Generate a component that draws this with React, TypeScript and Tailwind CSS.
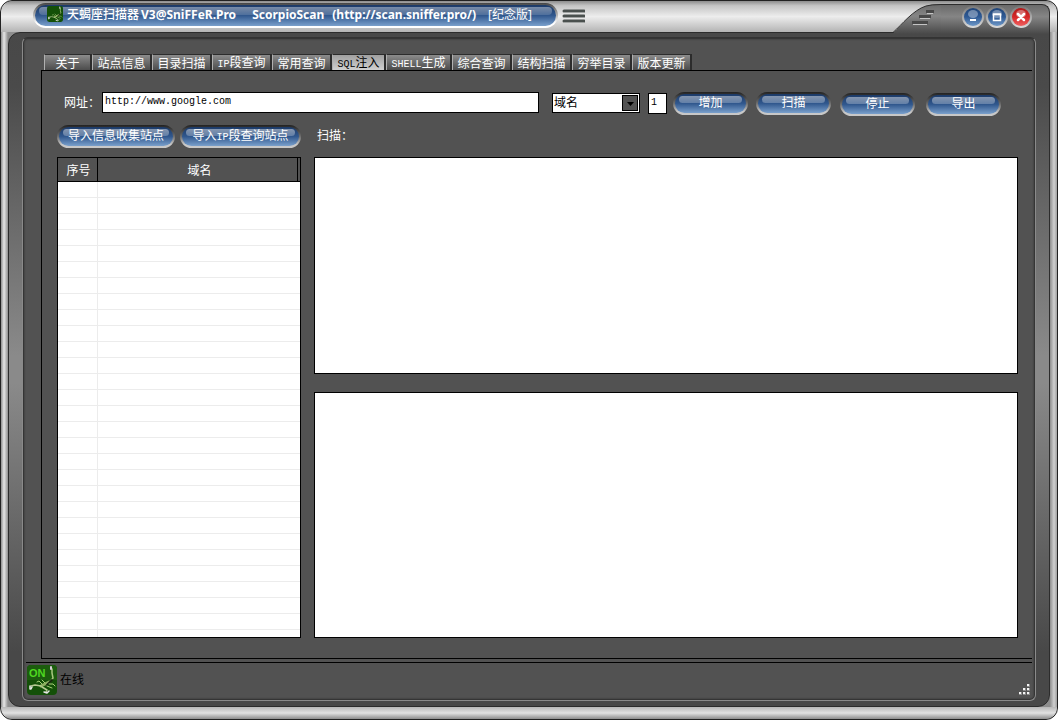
import { useState } from "react";
import type { ReactNode } from "react";
import clsx from "clsx";

const TABS = [
  { label: "关于", width: "w-12" },
  { label: "站点信息", width: "w-[60px]" },
  { label: "目录扫描", width: "w-[60px]" },
  { latin: "IP", label: "段查询", width: "w-[60px]" },
  { label: "常用查询", width: "w-[60px]" },
  { latin: "SQL", label: "注入", width: "w-[54px]" },
  { latin: "SHELL", label: "生成", width: "w-[66px]" },
  { label: "综合查询", width: "w-[60px]" },
  { label: "结构扫描", width: "w-[60px]" },
  { label: "穷举目录", width: "w-[60px]" },
  { label: "版本更新", width: "w-[60px]" },
];

const EMPTY_ROWS = 28;

/** Half-width latin letters, 6px each, next to 12px Chinese glyphs. */
function Latin({ children }: { children: ReactNode }) {
  return <span className="font-['Liberation_Mono',monospace] text-[10px] leading-none">{children}</span>;
}

function GlossButton({ children, className }: { children: ReactNode; className?: string }) {
  return (
    <button
      type="button"
      className={clsx(
        "relative h-[23px] shrink-0 rounded-full border-2 border-transparent [background:linear-gradient(#1c3a68,#31588e_50%,#7aa0cc)_padding-box,linear-gradient(#222,#707070_50%,#c8c8c8_85%)_border-box] text-xs leading-4 whitespace-nowrap text-white",
        className,
      )}
    >
      <span className="absolute inset-x-1 top-0.5 h-[7px] rounded-full bg-linear-to-b from-white/45 to-white/25" />
      <span className="relative -top-0.5">{children}</span>
    </button>
  );
}

function WindowButton({ label, danger, children }: { label: string; danger?: boolean; children: ReactNode }) {
  return (
    <button
      type="button"
      aria-label={label}
      className={clsx(
        "flex size-[22px] items-center justify-center rounded-full border-2 border-transparent",
        danger
          ? "[background:linear-gradient(#b01c1c,#d42828_50%,#f06060)_padding-box,linear-gradient(#777,#ddd)_border-box]"
          : "[background:linear-gradient(#1f4478,#2f5a94_50%,#6e98c8)_padding-box,linear-gradient(#777,#ddd)_border-box]",
      )}
    >
      <svg width="18" height="18" viewBox="0 0 18 18" className="shrink-0">
        <ellipse cx="9" cy="6" rx="5" ry="4" fill="#fff" opacity="0.35" />
        {children}
      </svg>
    </button>
  );
}

function Scorpion() {
  return (
    <g fill="none" strokeLinecap="round" strokeLinejoin="round">
      <path d="M25 4 L25 8 L26 13 L23 17 L19 19" stroke="#a8c880" strokeWidth="1.5" />
      <path d="M24 2 L24 4" stroke="#d8d0d8" strokeWidth="2" />
      <path d="M22 17 L14 21" stroke="#8dad60" strokeWidth="3" />
      <path d="M25 15 L20 20" stroke="#15280c" strokeWidth="2" />
      <path d="M14 21 L8 20 L4 21 M15 22 L20 25 L19 27" stroke="#b4c890" strokeWidth="1.5" />
      <path d="M3 21 L3 24 M5 22 L4 24 M17 27 L20 28 L22 26" stroke="#e6e6e6" strokeWidth="1.5" />
      <path d="M15 19 L12 16 L10 17 M18 18 L15 15 M22 19 L26 19 L28 21 M20 21 L25 23" stroke="#a8cf78" />
    </g>
  );
}

function TitleBar() {
  return (
    <header className="flex h-[31px] items-start rounded-t-xl bg-[linear-gradient(#8d8d8d,#c4c4c4_15%,#ededed_50%,#b4b4b4)] pr-[7px] pl-8">
      <div className="relative mt-0.5 flex h-[25px] w-[525px] items-center rounded-full border-2 border-transparent [background:linear-gradient(#1c3a68,#31588e_50%,#7aa0cc)_padding-box,linear-gradient(#444,#aaa_45%,#fff_80%)_border-box] pl-3">
        <span className="absolute inset-x-1 top-0.5 h-2 rounded-full bg-linear-to-b from-white/40 to-white/15" />
        <svg width="16" height="16" viewBox="0 0 30 30" className="relative mr-1 -mt-1 shrink-0">
          <rect width="30" height="30" rx="4" fill="#145008" />
          <Scorpion />
        </svg>
        <h1 className="relative -mt-0.5 flex font-['Noto_Sans','Noto_Sans_CJK_SC',sans-serif] text-xs leading-4 whitespace-pre text-white">
          <span className="font-medium">天蝎座扫描器</span>
          <span className="ml-0.5 font-bold">V3@SniFFeR.Pro</span>
          <span className="ml-4 font-bold">ScorpioScan</span>
          <span className="ml-2 font-bold">(http://scan.sniffer.pro/)</span>
          <span className="ml-3">[纪念版]</span>
        </h1>
      </div>
      <button type="button" aria-label="菜单" className="mt-[7px] ml-1">
        <svg width="23" height="16" viewBox="0 0 23 16">
          <path d="M2 4H22M2 9H22M2 14H22" stroke="#f5f5f5" strokeWidth="2" />
          <path d="M2 3H22M2 8H22M2 13H22" stroke="#4a504e" strokeWidth="3" strokeLinecap="round" />
        </svg>
      </button>
      <div className="relative z-10 mt-[3px] ml-auto flex h-[30px]">
        <svg width="48" height="30" viewBox="0 0 48 30" className="shrink-0">
          <defs>
            <linearGradient id="shoulder" x1="0" y1="0" x2="0" y2="1">
              <stop offset="0" stopColor="#6a6a6a" />
              <stop offset="0.4" stopColor="#858585" />
              <stop offset="1" stopColor="#484848" />
            </linearGradient>
          </defs>
          <path d="M0 29 C9 21 20 6 33 2 Q38 0 48 0 V30 H0Z" fill="url(#shoulder)" />
          <path d="M0 28.5 C9 20.500 20 6 33 2 Q38 .5 48 .5" fill="none" stroke="#2c2c2c" />
          <path d="M34 9.500H40M27 14.500H37M20 20.500H34" stroke="#c4c4c4" />
          <path d="M33 7.500H41M26 12.500H38M19 18.500H35" stroke="#484848" strokeWidth="3" />
        </svg>
        <div className="flex items-start gap-0.5 rounded-tr-lg border-t border-r border-[#2c2c2c] bg-[linear-gradient(#6a6a6a,#858585_40%,#484848)] pt-px pr-[17px] pl-[21px]">
          <WindowButton label="最小化">
            <path d="M6 12H12" stroke="#fff" strokeWidth="2" />
          </WindowButton>
          <WindowButton label="最大化">
            <path d="M5.500 6.500H12.500V12.500H5.500Z M5 6H13" fill="none" stroke="#fff" strokeWidth="1.5" />
          </WindowButton>
          <WindowButton label="关闭" danger>
            <path d="M6 6L12 12M12 6L6 12" stroke="#fff" strokeWidth="2.500" strokeLinecap="round" />
          </WindowButton>
        </div>
      </div>
    </header>
  );
}

function DomainTable() {
  return (
    <div className="flex border border-black bg-white">
      <table className="w-full table-fixed border-separate border-spacing-0 text-xs">
        <thead>
          <tr className="h-6 bg-[#525252] text-white">
            <th className="w-10 border-r border-b border-black py-0 pr-0 pl-0.5 font-normal">序号</th>
            <th className="border-r border-b border-black py-0 pr-0 pl-1 font-normal">域名</th>
            <th className="w-0.5 border-b border-black p-0" />
          </tr>
        </thead>
        <tbody>
          {Array.from({ length: EMPTY_ROWS }, (_, i) => (
            <tr key={i} className="h-4">
              <td className="border-r border-b border-[#ececec] p-0" />
              <td colSpan={2} className="border-b border-[#ececec] p-0" />
            </tr>
          ))}
          <tr>
            <td className="border-r border-[#ececec] p-0" />
            <td colSpan={2} className="p-0" />
          </tr>
        </tbody>
      </table>
    </div>
  );
}

function InjectionPage() {
  const [url, setUrl] = useState("http://www.google.com");
  const [depth, setDepth] = useState("1");

  return (
    <section className="mr-[3px] ml-[18px] flex flex-1 flex-col border-y border-l border-black pt-[21px] pr-[14px] pb-5 pl-[15px]">
      <div className="flex h-[23px] items-start pr-[17px]">
        <label htmlFor="url" className="mt-0.5 w-[45px] shrink-0 pl-[7px] text-xs leading-4 whitespace-nowrap">
          网址：
        </label>
        <input
          id="url"
          value={url}
          onChange={(e) => setUrl(e.target.value)}
          className="h-[21px] min-w-0 flex-1 border border-black bg-white px-0.5 pb-0.5 font-['Liberation_Mono',monospace] text-[10px] text-black outline-none"
        />
        <div className="relative mt-px ml-[13px] w-[88px] shrink-0">
          <select
            aria-label="类型"
            className="block h-5 w-full appearance-none border border-black bg-white px-px pb-0.5 text-xs leading-4 text-black outline-none"
          >
            <option>域名</option>
          </select>
          <svg width="16" height="16" viewBox="0 0 16 16" className="pointer-events-none absolute top-0.5 right-0.5">
            <rect x="0.500" y="0.500" width="15" height="15" fill="#525252" stroke="#000" />
            <path d="M5 7H12L8.500 11Z" fill="#000" />
          </svg>
        </div>
        <input
          aria-label="数量"
          value={depth}
          onChange={(e) => setDepth(e.target.value)}
          className="mt-px ml-2 h-[21px] w-[19px] shrink-0 border border-black bg-white px-0.5 pb-0.5 font-['Liberation_Mono',monospace] text-[10px] text-black outline-none"
        />
        <GlossButton className="ml-1.5 w-[75px]">增加</GlossButton>
        <GlossButton className="ml-2 w-[75px]">扫描</GlossButton>
        <GlossButton className="mt-px ml-[9px] w-[75px]">停止</GlossButton>
        <GlossButton className="mt-px ml-[11px] w-[75px]">导出</GlossButton>
      </div>

      <div className="mt-2.5 flex h-[23px] items-start">
        <GlossButton className="w-[118px]">导入信息收集站点</GlossButton>
        <GlossButton className="ml-[5px] w-[121px]">
          导入<Latin>IP</Latin>段查询站点
        </GlossButton>
        <span className="mt-0.5 ml-4 text-xs leading-4">扫描：</span>
      </div>

      <div className="mt-[9px] grid flex-1 grid-cols-[244px_1fr] gap-[13px]">
        <DomainTable />
        <div className="flex flex-col gap-[18px]">
          <textarea
            aria-label="扫描结果"
            className="min-h-0 flex-[216] basis-0 resize-none border border-black bg-white p-1 text-xs text-black outline-none"
          />
          <textarea
            aria-label="扫描日志"
            className="min-h-0 flex-[247] basis-0 resize-none border border-black bg-white p-1 text-xs text-black outline-none"
          />
        </div>
      </div>
    </section>
  );
}

function StatusBar() {
  return (
    <footer className="mt-[3px] mr-[3px] ml-[3px] flex h-[38px] items-start border-t border-black pt-0.5 text-xs text-black">
      <svg width="30" height="30" viewBox="0 0 30 30" className="ml-px shrink-0">
        <rect width="30" height="30" rx="4" fill="#145008" />
        <path d="M0 15V4Q0 0 4 0H26Q30 0 30 4V15Z" fill="#1c5c0e" />
        <text x="2" y="12" fill="#4fd820" fontSize="11" fontWeight="bold" fontFamily="Liberation Sans, sans-serif">
          ON
        </text>
        <Scorpion />
      </svg>
      <span className="ml-[3px] leading-7">在线</span>
      <svg width="12" height="12" viewBox="0 0 12 12" className="mt-[19px] mr-px ml-auto">
        <path d="M8 0h3v3h-3zM4 4h3v3h-3zM8 4h3v3h-3zM0 8h3v3h-3zM4 8h3v3h-3zM8 8h3v3h-3z" fill="#8a8a8a" />
        <path d="M8 0h2v2h-2zM4 4h2v2h-2zM8 4h2v2h-2zM0 8h2v2h-2zM4 8h2v2h-2zM8 8h2v2h-2z" fill="#f4f4f4" />
      </svg>
    </footer>
  );
}

export default function App() {
  const [active, setActive] = useState(5);

  return (
    <div className="flex min-h-screen flex-col rounded-xl border border-[#222] bg-[linear-gradient(to_right,#8d8d8d,#e6e6e6_3px,#8d8d8d_7px,#aaa_50%,#8d8d8d_calc(100%-7px),#d0d0d0_calc(100%-3px),#a0a0a0)] font-['Noto_Sans_CJK_SC',sans-serif] text-white">
      <TitleBar />
      <main className="mx-[7px] flex flex-1 flex-col rounded-xl rounded-tr-none border border-[#2c2c2c] bg-[linear-gradient(#484848,#4a4a4a_8%,#8a8a8a_48%,#8a8a8a_52%,#484848_92%)] px-[13px] pt-1 pb-[5px]">
        <div className="flex flex-1 flex-col rounded-md border border-[#8a8a8a] border-t-[#333] bg-[#525252] pt-4 shadow-[inset_0_0_2px_1px_#2c2c2c]">
          <nav className="ml-[21px] flex h-4">
            {TABS.map((tab, i) => (
              <button
                key={tab.label}
                type="button"
                onClick={() => setActive(i)}
                className={clsx(
                  "shrink-0 border-t border-r-2 border-l border-t-[#2c2c2c] border-r-[#2c2c2c] border-l-[#b0b0b0] bg-linear-to-b text-xs leading-3 whitespace-nowrap",
                  tab.width,
                  i === active ? "from-[#a0a0a0] to-[#d0d0d0] text-black" : "from-[#8c8c8c] to-[#4c4c4c] text-white",
                )}
              >
                {tab.latin && <Latin>{tab.latin}</Latin>}
                {tab.label}
              </button>
            ))}
          </nav>
          <InjectionPage />
          <StatusBar />
        </div>
      </main>
      <div className="h-3 rounded-b-xl bg-linear-to-b from-[#b8b8b8] via-[#e2e2e2] to-[#8d8d8d]" />
    </div>
  );
}
